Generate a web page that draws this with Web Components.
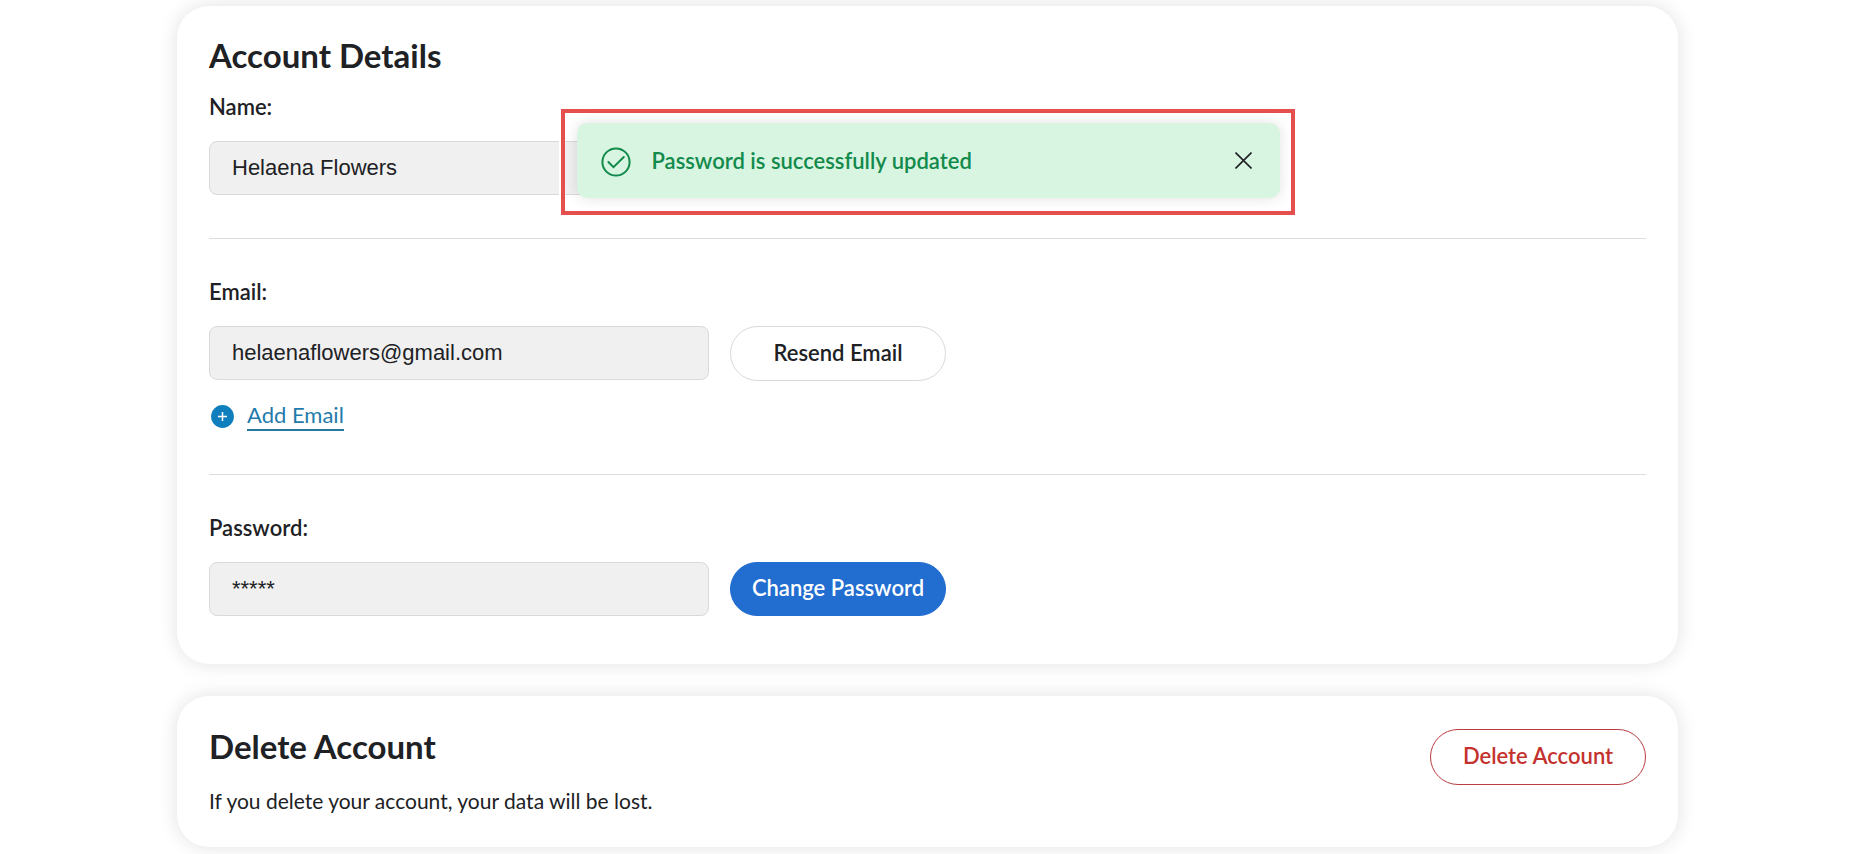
<!DOCTYPE html>
<html lang="en">
<head>
<meta charset="utf-8">
<title>Account Details</title>
<style>
  body { margin: 0; background: #fff; color: #202124; font-family: Lato, "Open Sans", sans-serif; font-size: 22px; }
</style>
</head>
<body>
<account-page>
  <account-card heading="Account Details">
    <account-field label="Name:" value="Helaena Flowers" type="text"></account-field>
    <account-field label="Email:" value="helaenaflowers@gmail.com" type="email" divided>
      <pill-button>Resend Email</pill-button>
      <add-link slot="below">Add Email</add-link>
    </account-field>
    <account-field label="Password:" value="*****" type="text" divided>
      <pill-button variant="primary">Change Password</pill-button>
    </account-field>
  </account-card>
  <delete-card></delete-card>
  <toast-message slot="toast">Password is successfully updated</toast-message>
</account-page>

<script>
const define = (name, html, setup) => {
  const template = document.createElement('template');
  template.innerHTML = '<style>:host,*{box-sizing:border-box}</style>' + html;
  customElements.define(name, class extends HTMLElement {
    constructor() {
      super();
      this.attachShadow({ mode: 'open' }).append(template.content.cloneNode(true));
    }
    connectedCallback() { if (setup) setup(this, this.shadowRoot); }
  });
};

define('account-page', `
  <style>
    :host { display: block; position: relative; padding: 6px 185px 7px 177px; overflow: hidden; }
    main { display: flex; flex-direction: column; gap: 32px; }
    .overlay { position: absolute; top: 109px; left: 177px; right: 185px; display: flex; justify-content: center; }
    @media (max-width: 1200px) {
      :host { padding: 6px 24px; }
      .overlay { left: 24px; right: 24px; }
    }
  </style>
  <main><slot></slot></main>
  <div class="overlay"><slot name="toast"></slot></div>
`);

define('account-card', `
  <style>
    :host { display: block; padding: 29px 32px 48px; border-radius: 32px; background: #fff; box-shadow: 0 0 20px rgba(0,0,0,.12); }
    h2 { margin: 0 0 16px; font-size: 33px; line-height: 40px; font-weight: 700; }
  </style>
  <h2></h2>
  <slot></slot>
`, (host, root) => { root.querySelector('h2').textContent = host.getAttribute('heading'); });

define('account-field', `
  <style>
    :host { display: block; }
    :host([divided]) { margin-top: 43px; padding-top: 37px; border-top: 1px solid #dcdddd; }
    label { display: block; margin-bottom: 18px; line-height: 32px; font-weight: 600; }
    .row { display: flex; flex-wrap: wrap; gap: 21px; align-items: flex-start; }
    input { width: 500px; max-width: 100%; height: 54px; padding: 0 22px; border: 1px solid #d8d9d9; border-radius: 8px;
      background: #f0f0f0; color: #202124; font: 22px/28px "Liberation Sans", Arial, sans-serif; outline: none; }
  </style>
  <label for="field"></label>
  <div class="row"><input id="field" readonly><slot></slot></div>
  <slot name="below"></slot>
`, (host, root) => {
  root.querySelector('label').textContent = host.getAttribute('label');
  const input = root.querySelector('input');
  input.type = host.getAttribute('type');
  input.value = host.getAttribute('value');
});

define('pill-button', `
  <style>
    :host { display: block; --fill: #fff; --ink: #202124; --line: #d8d9db; }
    :host([variant="primary"]) { --fill: #216dd0; --ink: #fff; --line: #216dd0; }
    :host([variant="danger"]) { --ink: #c4322e; --line: #b93c40; }
    button { min-width: 216px; height: 55px; padding: 0 20px 2px; border: 1px solid var(--line); border-radius: 28px;
      background: var(--fill); color: var(--ink); font: 600 22px/28px Lato, "Open Sans", sans-serif; white-space: nowrap; cursor: pointer; }
    :host([variant="primary"]) button { height: 54px; }
    :host([variant="danger"]) button { height: 56px; }
  </style>
  <button type="button"><slot></slot></button>
`);

define('add-link', `
  <style>
    :host { display: flex; align-items: center; gap: 13px; margin-top: 20px; padding-left: 2px; }
    svg { flex: none; width: 23px; height: 23px; }
    a { line-height: 28px; border-bottom: 2px solid #25789f; color: #1f7bab; text-decoration: none; }
  </style>
  <svg viewBox="0 0 23 23" aria-hidden="true"><circle cx="11.5" cy="11.5" r="11.4" fill="#0f7ebd"/><path d="M11.5 7v9M7 11.5h9" stroke="#fff" stroke-width="1.5"/></svg>
  <a href="#add-email"><slot></slot></a>
`);

define('delete-card', `
  <style>
    :host { display: flex; justify-content: space-between; align-items: flex-start; gap: 24px; padding: 30px 32px 31px; border-radius: 32px; background: #fff; box-shadow: 0 0 20px rgba(0,0,0,.12); }
    h2 { margin: 0 0 20px; font-size: 33px; line-height: 40px; font-weight: 700; }
    p { margin: 0; font-size: 21px; line-height: 30px; }
    pill-button { margin-top: 3px; }
  </style>
  <div><h2>Delete Account</h2><p>If you delete your account, your data will be lost.</p></div>
  <pill-button variant="danger">Delete Account</pill-button>
`);

define('toast-message', `
  <style>
    :host { display: block; width: 734px; max-width: 100%; padding: 10px 11px 13px 12px; border: 4px solid #e5504f; outline: 2px solid #fff; }
    .toast { display: flex; align-items: center; height: 75px; padding: 0 24px; border-radius: 10px;
      background: #d8f5e2; color: #128a4b; box-shadow: 0 0 14px rgba(0,0,0,.12); }
    .check { flex: none; width: 30px; height: 30px; margin: 2px 21px 0 0; }
    span { flex: 1; line-height: 30px; font-weight: 600; }
    button { display: flex; padding: 4px; border: 0; background: none; cursor: pointer; }
    button svg { width: 17px; height: 17px; }
  </style>
  <div class="toast" role="status">
    <svg class="check" viewBox="0 0 30 30" fill="none" stroke="#128a4b" stroke-width="2" stroke-linecap="round" aria-hidden="true"><circle cx="15" cy="15" r="13.6"/><path d="M7.4 15l5.1 5.2L22.8 10"/></svg>
    <span><slot></slot></span>
    <button type="button" aria-label="Close"><svg viewBox="0 0 17 17" fill="none" stroke="#202124" stroke-width="1.6"><path d="M.5.5l16 16M16.5.5l-16 16"/></svg></button>
  </div>
`);
</script>
</body>
</html>
